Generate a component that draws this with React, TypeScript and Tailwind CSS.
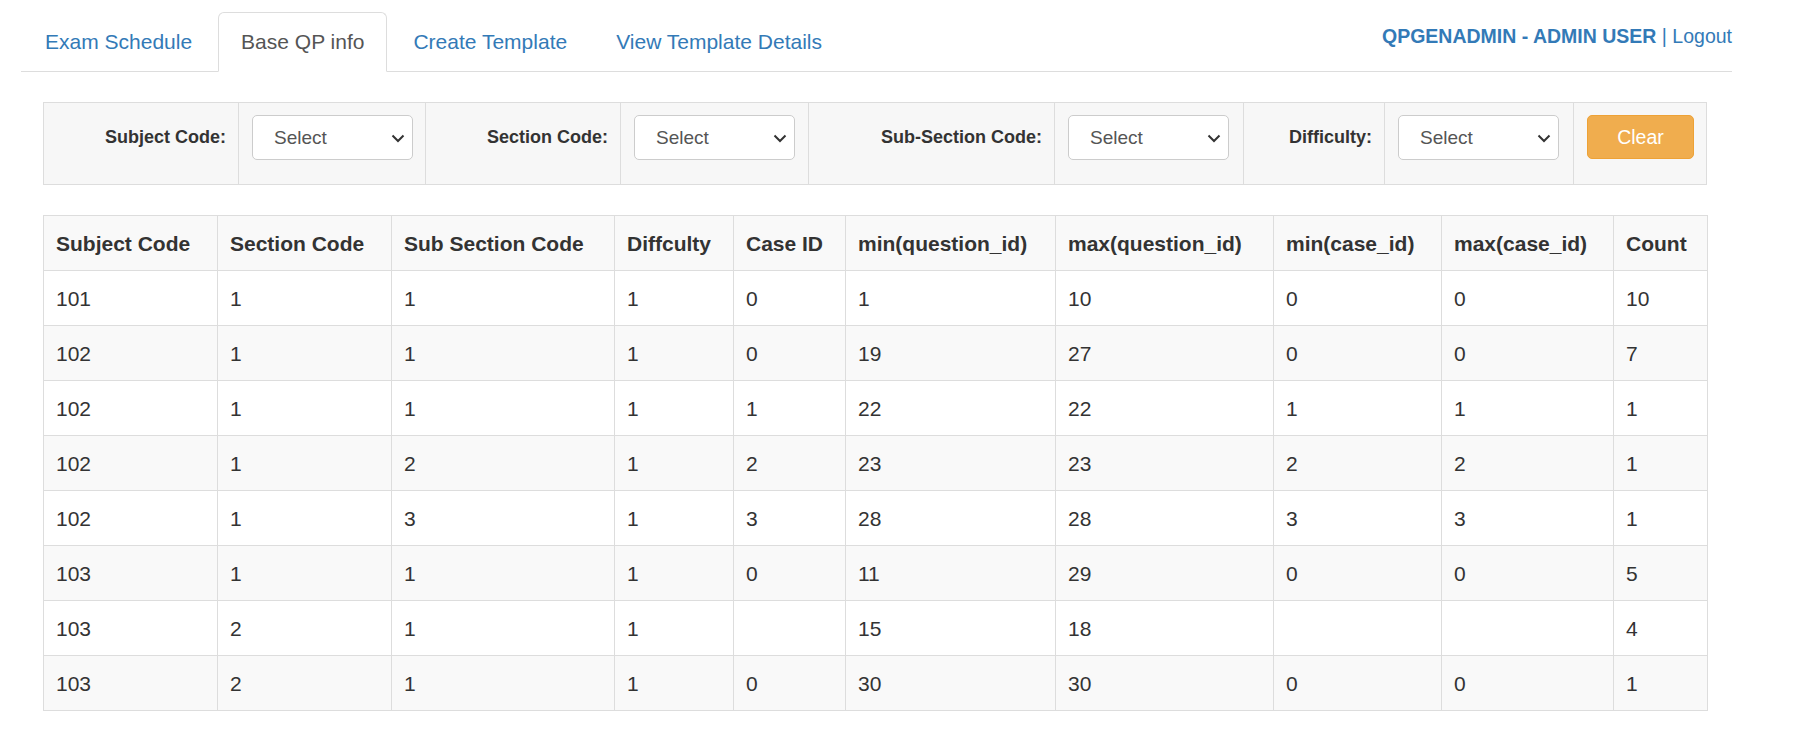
import React from "react";

const tabs = ["Exam Schedule", "Base QP info", "Create Template", "View Template Details"];

const filters = [
  { label: "Subject Code:", labelW: "w-[194px]", selW: "w-[187px]" },
  { label: "Section Code:", labelW: "w-[195px]", selW: "w-[188px]" },
  { label: "Sub-Section Code:", labelW: "w-[246px]", selW: "w-[189px]" },
  { label: "Difficulty:", labelW: "w-[141px]", selW: "w-[189px]" },
];

const columns = [
  { name: "Subject Code", w: "w-[174px]" },
  { name: "Section Code", w: "w-[174px]" },
  { name: "Sub Section Code", w: "w-[223px]" },
  { name: "Diffculty", w: "w-[119px]" },
  { name: "Case ID", w: "w-[112px]" },
  { name: "min(question_id)", w: "w-[210px]" },
  { name: "max(question_id)", w: "w-[218px]" },
  { name: "min(case_id)", w: "w-[168px]" },
  { name: "max(case_id)", w: "w-[172px]" },
  { name: "Count", w: "w-[94px]" },
];

const rows = [
  ["101", "1", "1", "1", "0", "1", "10", "0", "0", "10"],
  ["102", "1", "1", "1", "0", "19", "27", "0", "0", "7"],
  ["102", "1", "1", "1", "1", "22", "22", "1", "1", "1"],
  ["102", "1", "2", "1", "2", "23", "23", "2", "2", "1"],
  ["102", "1", "3", "1", "3", "28", "28", "3", "3", "1"],
  ["103", "1", "1", "1", "0", "11", "29", "0", "0", "5"],
  ["103", "2", "1", "1", "", "15", "18", "", "", "4"],
  ["103", "2", "1", "1", "0", "30", "30", "0", "0", "1"],
];

const FakeSelect = () => (
  <div className="flex h-[45px] w-[161px] items-center justify-between rounded-[5px] border border-[#ccc] bg-white pl-[21px] pr-[6px] pt-[2px] text-[19px] text-[#555]">
    <span>Select</span>
    <svg width="14" height="9" viewBox="0 0 14 9" className="mr-[1px]">
      <polyline points="1.5,1.5 7,7 12.5,1.5" fill="none" stroke="#333" strokeWidth="2" />
    </svg>
  </div>
);

export default function App() {
  return (
    <div className="min-h-[732px] w-[1793px] bg-white pt-[12px] font-['Liberation_Sans',Arial,sans-serif] text-[#333]">
      <div className="ml-[21px] flex w-[1711px] items-start justify-between border-b border-[#ddd]">
        <ul className="-mb-px flex">
          {tabs.map((t, i) => (
            <li key={t} className={i === 0 ? "ml-[1px] mr-[3px]" : "mr-[3px]"}>
              <a
                className={
                  i === 1
                    ? "block rounded-t-[6px] border border-[#ddd] border-b-white bg-white px-[22px] pb-[14px] pt-[14px] text-[21px] leading-[30px] text-[#555]"
                    : "block rounded-t-[6px] border border-transparent px-[22px] pb-[14px] pt-[14px] text-[21px] leading-[30px] text-[#337ab7]"
                }
              >
                {t}
              </a>
            </li>
          ))}
        </ul>
        <div className="mt-[10px] text-[19.5px] leading-[28px] text-[#337ab7]">
          <span className="font-bold">QPGENADMIN - ADMIN USER</span> | <span>Logout</span>
        </div>
      </div>

      <div className="ml-[43px] mt-[30px] flex h-[83px] w-[1664px] border border-[#ddd] bg-[#f7f7f7]">
        {filters.map((f, i) => (
          <React.Fragment key={f.label}>
            <div className={`${f.labelW} ${i > 0 ? "border-l border-[#ddd]" : ""} pr-[12px] pt-[12px]`}>
              <div className="flex h-[45px] items-center justify-end text-[18px] font-bold text-[#333]">{f.label}</div>
            </div>
            <div className={`${f.selW} border-l border-[#ddd] pl-[13px] pt-[12px]`}>
              <FakeSelect />
            </div>
          </React.Fragment>
        ))}
        <div className="flex-1 border-l border-[#ddd] pl-[13px] pt-[12px]">
          <button className="h-[44px] w-[107px] rounded-[5px] border border-[#eea236] bg-[#f0ad4e] pt-[2px] text-[19.5px] text-white">
            Clear
          </button>
        </div>
      </div>

      <table className="ml-[43px] mt-[30px] w-[1664px] table-fixed border-collapse border border-[#ddd] text-[21px]">
        <tbody>
          <tr className="bg-[#f9f9f9]">
            {columns.map((c) => (
              <th key={c.name} className={`${c.w} h-[55px] border border-[#ddd] px-[12px] pt-[1px] text-left font-bold text-[#333]`}>
                {c.name}
              </th>
            ))}
          </tr>
          {rows.map((r, i) => (
            <tr key={i} className={i % 2 === 1 ? "bg-[#f9f9f9]" : "bg-white"}>
              {r.map((v, j) => (
                <td key={j} className="h-[55px] border border-[#ddd] px-[12px] pt-[1px] text-left text-[#333]">
                  {v}
                </td>
              ))}
            </tr>
          ))}
        </tbody>
      </table>
    </div>
  );
}
